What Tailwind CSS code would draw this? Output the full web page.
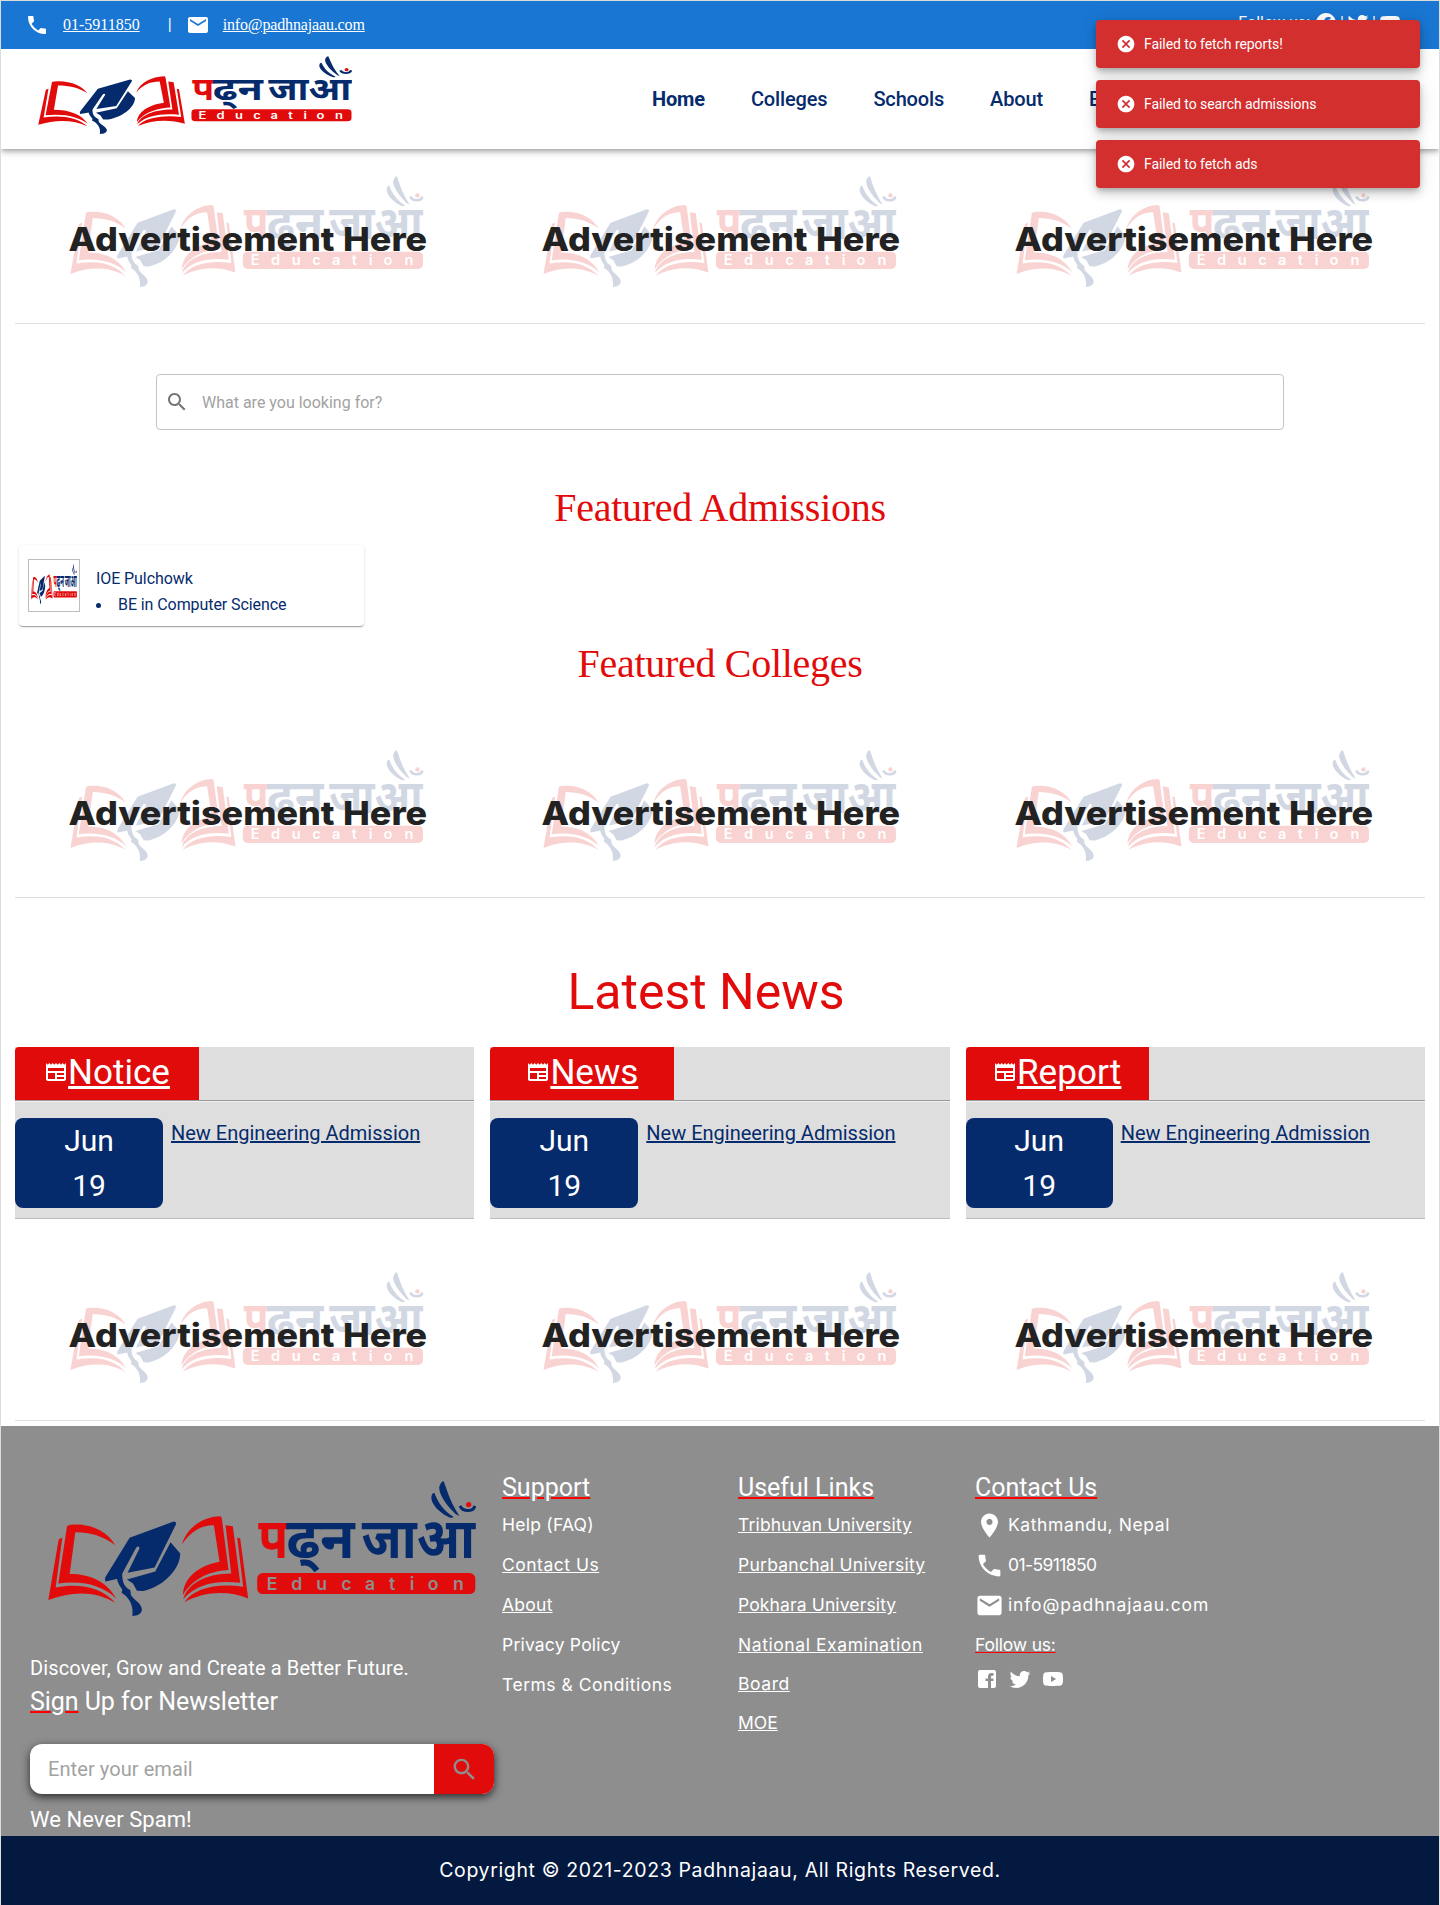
<!DOCTYPE html>
<html lang="en">
<head>
<meta charset="utf-8">
<title>Padhnajaau</title>
<script src="https://cdn.jsdelivr.net/npm/@tailwindcss/browser@4"></script>
</head>
<body class="bg-white font-[Roboto,sans-serif] text-base">
<svg class="hidden" aria-hidden="true">
  <symbol id="logo" viewBox="143 212 1285 406" preserveAspectRatio="none">
    <g fill="#e20b0b">
      <path d="M200 348Q205 343 225 343C285 343 325 370 345 405C310 378 270 366 225 366L208 492C270 492 320 515 347 565C310 528 250 510 174 520Z"/>
      <path d="M175 388L186 382L166 532C240 520 300 530 345 578C290 545 220 540 144 570Z"/>
      <path d="M545 403C560 350 610 320 658 318Q664 318 665 325L685 480C640 482 580 500 548 555C550 500 600 465 658 455L641 345C600 345 570 365 545 403Z"/>
      <path d="M676 345L698 348L720 518C650 510 590 520 549 567C560 525 610 490 693 490Z"/>
      <path d="M711 382L720 385L744 565C680 540 610 545 552 577C580 535 650 518 729 530Z"/>
      <rect x="771" y="489" width="655" height="63" rx="17"/>
      <circle cx="1406" cy="283" r="8"/>
      <text x="774" y="443" font-family="Noto Sans" font-weight="700" font-size="170" textLength="90" lengthAdjust="spacingAndGlyphs">प</text>
    </g>
    <g fill="#052b6c">
      <path d="M388 383L520 334Q530 334 527 343L463 472L382 488L418 414Q416 405 408 412L366 490L352 506L316 514Q312 508 316 500Z"/>
      <path d="M511 396L540 430C540 470 500 525 430 543L410 542L398 520L380 508L465 484Z"/>
      <path d="M350 500L366 488C365 515 372 530 390 540L392 555C400 570 425 580 425 600C422 612 415 617 396 618C400 590 390 570 375 556L364 548L366 538C356 525 350 515 350 500Z"/>
      <path d="M1331 213C1340 235 1345 265 1378 317Q1366 314 1358 302C1335 280 1310 240 1320 224Q1325 212 1331 213Z"/>
      <path d="M1303 247C1316 280 1330 300 1361 320Q1352 326 1343 319C1312 302 1285 272 1297 250Z"/>
      <path d="M1380 287Q1386 301 1404 301Q1420 301 1425 287" fill="none" stroke="#052b6c" stroke-width="9"/>
      <text x="858" y="443" font-family="Noto Sans" font-weight="700" font-size="170" textLength="206" lengthAdjust="spacingAndGlyphs">ढ्न</text>
      <text x="1085" y="443" font-family="Noto Sans" font-weight="700" font-size="170" textLength="340" lengthAdjust="spacingAndGlyphs">जाआ</text>
    </g>
    <text x="816 890 965 1039 1110 1176 1236 1299 1375" y="539" fill="currentColor" text-anchor="middle" font-family="Inter" font-weight="600" font-size="53">Education</text>
  </symbol>
  <symbol id="ad" viewBox="0 0 360 112">
    <use href="#logo" x="3.2" y="0" width="353.3" height="111" opacity=".18"/>
    <g fill="#222" font-family="Inter" font-weight="800" font-size="32.5">
      <text x="1.500" y="74.500" textLength="266" lengthAdjust="spacingAndGlyphs">Advertisement</text>
      <text x="276" y="74.500" textLength="84" lengthAdjust="spacingAndGlyphs">Here</text>
    </g>
  </symbol>
  <symbol id="phone" viewBox="0 0 24 24"><path d="M6.62 10.79c1.44 2.83 3.76 5.14 6.59 6.59l2.2-2.2c.27-.27.67-.36 1.02-.24 1.12.37 2.33.57 3.57.57.55 0 1 .45 1 1V20c0 .55-.45 1-1 1-9.39 0-17-7.61-17-17 0-.55.45-1 1-1h3.5c.55 0 1 .45 1 1 0 1.25.2 2.45.57 3.57.11.35.03.74-.25 1.02l-2.2 2.2z"/></symbol>
  <symbol id="mail" viewBox="0 0 24 24"><path d="M20 4H4c-1.1 0-1.99.9-1.99 2L2 18c0 1.100.9 2 2 2h16c1.100 0 2-.9 2-2V6c0-1.100-.9-2-2-2zm0 4l-8 5-8-5V6l8 5 8-5v2z"/></symbol>
  <symbol id="twitter" viewBox="0 0 24 24"><path d="M22.46 6c-.77.35-1.600.58-2.460.69.88-.53 1.560-1.370 1.880-2.380-.83.5-1.750.85-2.720 1.050C18.370 4.500 17.260 4 16 4c-2.350 0-4.270 1.920-4.270 4.290 0 .34.04.67.11.98C8.280 9.090 5.110 7.380 3 4.790c-.37.63-.58 1.370-.58 2.150 0 1.490.75 2.810 1.910 3.560-.71 0-1.370-.2-1.950-.5v.03c0 2.080 1.480 3.820 3.440 4.210a4.220 4.220 0 0 1-1.930.07 4.280 4.280 0 0 0 4 2.980 8.521 8.521 0 0 1-5.330 1.840c-.34 0-.68-.02-1.020-.06C3.440 20.290 5.700 21 8.120 21 16 21 20.330 14.460 20.330 8.790c0-.19 0-.37-.01-.56.84-.6 1.560-1.360 2.140-2.230z"/></symbol>
  <symbol id="youtube" viewBox="0 0 24 24"><path d="M10 15l5.190-3L10 9v6m11.560-7.830c.13.47.22 1.100.28 1.900.07.8.1 1.490.1 2.090L22 12c0 2.190-.16 3.800-.44 4.830-.25.9-.83 1.480-1.730 1.730-.47.13-1.330.22-2.650.28-1.300.07-2.490.1-3.590.1L12 19c-4.190 0-6.800-.16-7.830-.44-.9-.25-1.480-.83-1.730-1.730-.13-.47-.22-1.100-.28-1.900-.07-.8-.1-1.490-.1-2.090L2 12c0-2.190.16-3.800.44-4.830.25-.9.83-1.480 1.730-1.730.47-.13 1.330-.22 2.650-.28 1.300-.07 2.490-.1 3.590-.1L12 5c4.190 0 6.800.16 7.830.44.9.25 1.480.83 1.730 1.730z"/></symbol>
  <symbol id="search" viewBox="0 0 24 24"><path d="M15.500 14h-.79l-.28-.27C15.410 12.590 16 11.110 16 9.500 16 5.910 13.090 3 9.500 3S3 5.910 3 9.500 5.910 16 9.500 16c1.610 0 3.090-.59 4.230-1.570l.27.28v.79l5 4.990L20.490 19l-4.990-5zm-6 0C7.010 14 5 11.990 5 9.500S7.010 5 9.500 5 14 7.010 14 9.500 11.990 14 9.500 14z"/></symbol>
  <symbol id="cancel" viewBox="0 0 24 24"><path d="M12 2C6.470 2 2 6.470 2 12s4.470 10 10 10 10-4.470 10-10S17.530 2 12 2zm5 13.590L15.590 17 12 13.410 8.410 17 7 15.590 10.590 12 7 8.410 8.410 7 12 10.590 15.590 7 17 8.410 13.410 12 17 15.590z"/></symbol>
  <symbol id="paper" viewBox="0 0 24 24"><path d="M22 3l-1.670 1.670L18.670 3 17 4.670 15.330 3l-1.660 1.670L12 3l-1.670 1.670L8.670 3 7 4.670 5.330 3 3.670 4.670 2 3v16c0 1.100.9 2 2 2h16c1.100 0 2-.9 2-2V3zM11 19H4v-6h7v6zm9 0h-7v-2h7v2zm0-4h-7v-2h7v2zm0-4H4V8h16v3z"/></symbol>
</svg>

<div class="h-[1905px] overflow-hidden border-x border-t border-[#dcdcdc]">
  <header class="h-[148px] bg-white shadow-[0_2px_4px_-1px_rgba(0,0,0,.2),0_4px_5px_0_rgba(0,0,0,.14),0_1px_10px_0_rgba(0,0,0,.12)]">
    <div class="flex h-12 items-center justify-between bg-[#1976d2] pr-[37px] pl-6 text-white">
      <div class="flex items-center font-['Liberation_Serif',serif]">
        <svg class="size-6 fill-current"><use href="#phone"/></svg>
        <a class="ml-[14px] underline">01-5911850</a>
        <span class="ml-[28px] font-[Roboto,sans-serif]">|</span>
        <svg class="ml-[14px] size-6 fill-current"><use href="#mail"/></svg>
        <a class="ml-[13px] tracking-[-.15px] underline">info@padhnajaau.com</a>
      </div>
      <div class="flex items-center pb-1">
        <span class="mr-1">Follow us:</span>
        <svg class="size-6 fill-current" viewBox="0 0 24 24"><path d="M12 2C6.500 2 2 6.500 2 12c0 5 3.700 9.100 8.400 9.900v-7H7.900V12h2.500V9.800c0-2.500 1.500-3.900 3.800-3.900 1.100 0 2.200.2 2.200.2v2.500h-1.300c-1.200 0-1.600.8-1.600 1.600V12h2.800l-.4 2.900h-2.300v7C18.300 21.100 22 17 22 12c0-5.500-4.500-10-10-10z"/></svg>
        <span class="w-2 text-center">|</span>
        <svg class="size-6 fill-current"><use href="#twitter"/></svg>
        <span class="w-2 text-center">|</span>
        <svg class="size-6 fill-current"><use href="#youtube"/></svg>
      </div>
    </div>
    <div class="flex h-[100px] pl-[37px]">
      <svg class="mt-[7px] h-[78px] w-[314px] text-white"><use href="#logo"/></svg>
      <nav class="ml-[300px] flex h-[100px] items-center gap-[46px] text-[20px] font-medium tracking-[-.15px] text-[#052b6c]">
        <a class="font-bold">Home</a><a>Colleges</a><a>Schools</a><a>About</a><a>Blogs</a>
      </nav>
    </div>
  </header>

  <main>
    <section>
      <div class="mx-[10px] grid h-[174px] grid-cols-3 justify-items-center pt-[27px] text-white">
        <svg class="h-28 w-[360px]"><use href="#ad"/></svg>
        <svg class="h-28 w-[360px]"><use href="#ad"/></svg>
        <svg class="h-28 w-[360px]"><use href="#ad"/></svg>
      </div>
      <hr class="mx-[14px] border-[#dedede]">
    </section>

    <div class="mx-[155px] mt-[50px] flex h-14 items-center rounded border border-[#c4c4c4] pl-2 text-[#a2a2a2]">
      <svg class="size-6 fill-[#757575]"><use href="#search"/></svg>
      <span class="ml-[13px] pt-0.5">What are you looking for?</span>
    </div>

    <h2 class="mt-[48px] text-center font-['Liberation_Serif',serif] text-[40px] leading-[60px] tracking-[-.27px] text-[#e20b0b]">Featured Admissions</h2>
    <div class="mt-[7px] ml-[18px] flex h-[81px] w-[345px] rounded pl-[9px] text-[#052b6c] shadow-[0_2px_1px_-1px_rgba(0,0,0,.2),0_1px_1px_0_rgba(0,0,0,.14),0_1px_3px_0_rgba(0,0,0,.12)]">
      <div class="mt-[14px] flex h-[53px] w-[52px] justify-center border border-[#bdbdbd] pt-1 text-white">
        <svg class="h-[40px] w-[46px]"><use href="#logo"/></svg>
      </div>
      <div class="ml-4 pt-[21px] leading-[26px] tracking-[-.08px]">
        <p>IOE Pulchowk</p>
        <ul><li class="flex items-center gap-[17px]"><i class="size-[5px] rounded-full bg-[#052b6c]"></i>BE in Computer Science</li></ul>
      </div>
    </div>
    <h2 class="mt-[8px] text-center font-['Liberation_Serif',serif] text-[40px] leading-[60px] tracking-[-.3px] text-[#e20b0b]">Featured Colleges</h2>

    <section>
      <div class="mx-[10px] grid h-[203px] grid-cols-3 justify-items-center pt-[56px] text-white">
        <svg class="h-28 w-[360px]"><use href="#ad"/></svg>
        <svg class="h-28 w-[360px]"><use href="#ad"/></svg>
        <svg class="h-28 w-[360px]"><use href="#ad"/></svg>
      </div>
      <hr class="mx-[14px] border-[#dedede]">
    </section>

    <h2 class="mt-[64px] pr-[28px] text-center text-[50px] leading-[60px] text-[#e20b0b]">Latest News</h2>
    <section class="mx-[14px] mt-[25px] grid grid-cols-3 gap-4">
      <article class="h-[172px] border-b border-[#bbb] bg-[#dedede]">
        <div class="h-[54px] border-b border-[#999]">
          <h3 class="flex h-[53px] w-[184px] items-center justify-center rounded-tl bg-[#e20b0b] text-[35px] leading-[50px] text-white"><svg class="mb-1 size-6 fill-current"><use href="#paper"/></svg><a class="mb-px underline">Notice</a></h3>
        </div>
        <div class="flex border-t border-[#f0f0f0] pt-4">
          <div class="h-[90px] w-[148px] rounded-lg bg-[#052b6c] text-center text-[30px] leading-[45px] text-white">Jun<br>19</div>
          <a class="ml-2 text-[20px] leading-[30px] text-[#052b6c] underline">New Engineering Admission</a>
        </div>
      </article>
      <article class="h-[172px] border-b border-[#bbb] bg-[#dedede]">
        <div class="h-[54px] border-b border-[#999]">
          <h3 class="flex h-[53px] w-[184px] items-center justify-center rounded-tl bg-[#e20b0b] text-[35px] leading-[50px] text-white"><svg class="mb-1 size-6 fill-current"><use href="#paper"/></svg><a class="mb-px underline">News</a></h3>
        </div>
        <div class="flex border-t border-[#f0f0f0] pt-4">
          <div class="h-[90px] w-[148px] rounded-lg bg-[#052b6c] text-center text-[30px] leading-[45px] text-white">Jun<br>19</div>
          <a class="ml-2 text-[20px] leading-[30px] text-[#052b6c] underline">New Engineering Admission</a>
        </div>
      </article>
      <article class="h-[172px] border-b border-[#bbb] bg-[#dedede]">
        <div class="h-[54px] border-b border-[#999]">
          <h3 class="flex h-[53px] w-[183px] items-center justify-center rounded-tl bg-[#e20b0b] text-[35px] leading-[50px] text-white"><svg class="mb-1 size-6 fill-current"><use href="#paper"/></svg><a class="mb-px tracking-[.1px] underline">Report</a></h3>
        </div>
        <div class="flex border-t border-[#f0f0f0] pt-4">
          <div class="h-[90px] w-[147px] rounded-lg bg-[#052b6c] text-center text-[30px] leading-[45px] text-white">Jun<br>19</div>
          <a class="ml-2 text-[20px] leading-[30px] text-[#052b6c] underline">New Engineering Admission</a>
        </div>
      </article>
    </section>

    <section>
      <div class="mx-[10px] grid h-[201px] grid-cols-3 justify-items-center pt-[53px] text-white">
        <svg class="h-28 w-[360px]"><use href="#ad"/></svg>
        <svg class="h-28 w-[360px]"><use href="#ad"/></svg>
        <svg class="h-28 w-[360px]"><use href="#ad"/></svg>
      </div>
      <hr class="mx-[14px] border-[#dedede]">
    </section>
  </main>

  <footer class="mt-[5px] text-white">
    <div class="flex h-[410px] bg-[#8e8e8e] pl-[29px]">
      <div class="w-[464px]">
        <svg class="mt-[55px] ml-[18px] h-[135px] w-[428px] text-[#8e8e8e]"><use href="#logo"/></svg>
        <p class="mt-[37px] text-[20px] leading-[30px] tracking-[.0060em]">Discover, Grow and Create a Better Future.</p>
        <h4 class="mt-[3px] text-[25px] leading-[32px] tracking-[-.06px]"><span class="underline decoration-[#f00] decoration-2">Sign</span> Up for Newsletter</h4>
        <div class="mt-[26px] flex h-[50px] items-center overflow-hidden rounded-xl bg-white shadow-[0_3px_8px_rgba(0,0,0,.7)]">
          <span class="flex-1 pl-[18px] text-[20px] tracking-[.08px] text-[#a2a2a2]">Enter your email</span>
          <span class="flex h-full w-[60px] items-center justify-center bg-[#e20b0b]"><svg class="size-[29px] fill-[#8e8e8e]"><use href="#search"/></svg></span>
        </div>
        <p class="mt-[10px] text-[22px] leading-[32px] tracking-[.06px]">We Never Spam!</p>
      </div>
      <div class="ml-2 w-[236px] pt-[47px]">
        <h4 class="text-[25px] leading-[30px] underline decoration-[#f00] decoration-2">Support</h4>
        <div class="mt-[2px] font-[Inter,sans-serif] text-[17.5px] leading-[40px]">
          <p class="tracking-[.24px]">Help (FAQ)</p><p class="tracking-[.5px]"><a class="underline">Contact Us</a></p><p class="tracking-[.25px]"><a class="underline">About</a></p><p class="tracking-[.2px]">Privacy Policy</p><p class="tracking-[.5px]">Terms &amp; Conditions</p>
        </div>
      </div>
      <div class="w-[237px] pt-[47px]">
        <h4 class="text-[25px] leading-[30px] underline decoration-[#f00] decoration-2">Useful Links</h4>
        <div class="mt-[2px] font-[Inter,sans-serif] text-[17.5px] leading-[40px]">
          <p class="tracking-[.16px]"><a class="underline">Tribhuvan University</a></p><p class="tracking-[.25px]"><a class="underline">Purbanchal University</a></p><p class="tracking-[.13px]"><a class="underline">Pokhara University</a></p><p class="leading-[39px] tracking-[.58px]"><a class="underline">National Examination<br>Board</a></p><p><a class="underline">MOE</a></p>
        </div>
      </div>
      <div class="pt-[47px]">
        <h4 class="text-[25px] leading-[30px] tracking-[-.05px] underline decoration-[#f00] decoration-2">Contact Us</h4>
        <div class="mt-[2px] font-[Inter,sans-serif] text-[17.5px] leading-[40px]">
          <p class="flex items-center gap-1 tracking-[.6px]"><svg class="size-[29px] fill-current" viewBox="0 0 24 24"><path d="M12 2C8.130 2 5 5.130 5 9c0 5.250 7 13 7 13s7-7.750 7-13c0-3.870-3.130-7-7-7zm0 9.500c-1.380 0-2.500-1.120-2.500-2.500s1.120-2.500 2.500-2.500 2.500 1.120 2.500 2.500-1.120 2.500-2.500 2.500z"/></svg>Kathmandu, Nepal</p>
          <p class="flex items-center gap-1 tracking-[-.6px]"><svg class="size-[29px] fill-current"><use href="#phone"/></svg>01-5911850</p>
          <p class="flex items-center gap-1 tracking-[.85px]"><svg class="size-[29px] fill-current"><use href="#mail"/></svg>info@padhnajaau.com</p>
          <p class="tracking-[-.2px]"><span class="underline decoration-[#f00]">Follow us:</span></p>
        </div>
        <div class="mt-[2px] flex gap-[9px]">
          <svg class="size-6 fill-current" viewBox="0 0 24 24"><path d="M5 3h14a2 2 0 0 1 2 2v14a2 2 0 0 1-2 2h-3v-7h2.500V11.500H16V10c0-.8.3-1.300 1.200-1.300h1.300V6h-2c-2.300 0-3.500 1.400-3.500 3.600v1.900h-2.500V14H13v7H5a2 2 0 0 1-2-2V5a2 2 0 0 1 2-2z"/></svg>
          <svg class="size-6 fill-current"><use href="#twitter"/></svg>
          <svg class="size-6 fill-current"><use href="#youtube"/></svg>
        </div>
      </div>
    </div>
    <div class="flex h-[69px] items-center justify-center bg-[#04193f] font-[Inter,sans-serif] text-[19.5px] tracking-[.63px]">Copyright © 2021-2023 Padhnajaau, All Rights Reserved.</div>
  </footer>
</div>

<div class="absolute top-5 right-5 flex w-[324px] flex-col gap-3 text-sm tracking-[-.06px] text-white">
  <div class="flex h-12 items-center gap-2 rounded bg-[#d32f2f] pl-5 shadow-[0_3px_5px_-1px_rgba(0,0,0,.2),0_6px_10px_0_rgba(0,0,0,.14),0_1px_18px_0_rgba(0,0,0,.12)]"><svg class="size-5 fill-current"><use href="#cancel"/></svg>Failed to fetch reports!</div>
  <div class="flex h-12 items-center gap-2 rounded bg-[#d32f2f] pl-5 shadow-[0_3px_5px_-1px_rgba(0,0,0,.2),0_6px_10px_0_rgba(0,0,0,.14),0_1px_18px_0_rgba(0,0,0,.12)]"><svg class="size-5 fill-current"><use href="#cancel"/></svg>Failed to search admissions</div>
  <div class="flex h-12 items-center gap-2 rounded bg-[#d32f2f] pl-5 shadow-[0_3px_5px_-1px_rgba(0,0,0,.2),0_6px_10px_0_rgba(0,0,0,.14),0_1px_18px_0_rgba(0,0,0,.12)]"><svg class="size-5 fill-current"><use href="#cancel"/></svg>Failed to fetch ads</div>
</div>
</body>
</html>
